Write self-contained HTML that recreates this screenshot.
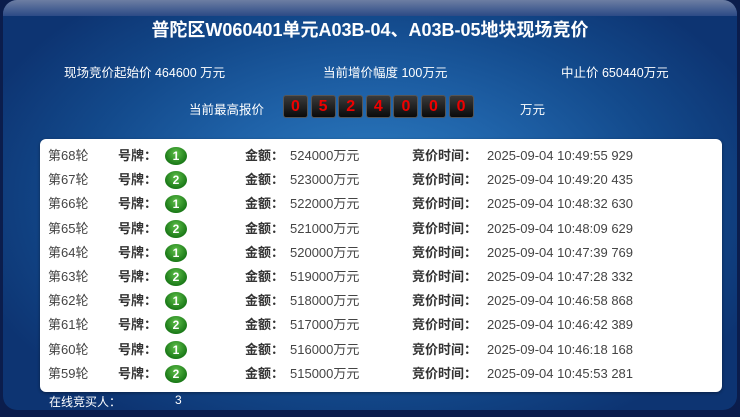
<!DOCTYPE html>
<html><head><meta charset="utf-8"><style>
*{margin:0;padding:0;box-sizing:border-box}
body{width:740px;height:417px;overflow:hidden;background:#0b1d4c;font-family:"Liberation Sans","Noto Sans CJK SC",sans-serif;position:relative}
#frame{position:absolute;left:3px;top:0;width:734px;height:410px;border-radius:14px;overflow:hidden;
background:radial-gradient(ellipse 420px 260px at 370px 200px,#2f82c6 0%,#1f62a8 40%,#134a8c 70%,#0d3472 100%)}
#top{position:absolute;left:0;top:0;width:100%;height:16px;background:linear-gradient(#6d7ea3,#2c4a86)}
.w{position:absolute;color:#fff;white-space:nowrap}
#title{top:16px;left:0;width:734px;text-align:center;font-size:18px;font-weight:bold}
.info{font-size:12.5px;top:62px}
.digits{position:absolute;left:280px;top:95px}
.d{position:absolute;top:0;width:25px;height:23px;border-radius:3px;background:linear-gradient(#3a3a3a,#0a0a0a);border:1px solid #555;color:#e00;font-weight:bold;font-size:16px;text-align:center;line-height:21px}
#panel{position:absolute;left:37px;top:139px;width:682px;height:253px;background:#fff;border-radius:6px;box-shadow:0 1px 3px rgba(0,0,0,.4)}
.row{position:absolute;left:0;height:24px;font-size:13px;color:#444;width:100%}
.row span{position:absolute;top:0;height:24px;line-height:24px;white-space:nowrap}
.row .b{font-weight:bold;color:#333}
.badge{position:absolute;top:3px;left:125px;width:22px;height:18px;border-radius:50%;background:radial-gradient(circle at 50% 35%,#5fc04a,#1b7a18 70%,#0f5a10);color:#fff;font-weight:bold;font-size:12px;text-align:center;line-height:18px}
</style></head><body>
<div id="frame">
<div id="top"></div>
<div class="w" id="title">普陀区W060401单元A03B-04、A03B-05地块现场竞价</div>
<div class="w info" style="left:61px">现场竞价起始价 464600 万元</div>
<div class="w info" style="left:320px">当前增价幅度 100万元</div>
<div class="w info" style="left:558px">中止价 650440万元</div>
<div class="w" style="left:186px;top:99px;font-size:12.5px">当前最高报价</div>
<div class="digits">
<div class="d" style="left:0">0</div><div class="d" style="left:27.6px">5</div><div class="d" style="left:55.2px">2</div><div class="d" style="left:82.8px">4</div><div class="d" style="left:110.4px">0</div><div class="d" style="left:138px">0</div><div class="d" style="left:165.6px">0</div>
</div>
<div class="w" style="left:517px;top:99px;font-size:12.5px">万元</div>
<div id="panel">
<div class="row" style="top:5px"><span style="left:8px">第68轮</span><span class="b" style="left:78px">号牌：</span><div class="badge">1</div><span class="b" style="left:205px">金额：</span><span style="left:250px">524000万元</span><span class="b" style="left:372px">竞价时间：</span><span style="left:447px">2025-09-04 10:49:55 929</span></div>
<div class="row" style="top:29.2px"><span style="left:8px">第67轮</span><span class="b" style="left:78px">号牌：</span><div class="badge">2</div><span class="b" style="left:205px">金额：</span><span style="left:250px">523000万元</span><span class="b" style="left:372px">竞价时间：</span><span style="left:447px">2025-09-04 10:49:20 435</span></div>
<div class="row" style="top:53.4px"><span style="left:8px">第66轮</span><span class="b" style="left:78px">号牌：</span><div class="badge">1</div><span class="b" style="left:205px">金额：</span><span style="left:250px">522000万元</span><span class="b" style="left:372px">竞价时间：</span><span style="left:447px">2025-09-04 10:48:32 630</span></div>
<div class="row" style="top:77.6px"><span style="left:8px">第65轮</span><span class="b" style="left:78px">号牌：</span><div class="badge">2</div><span class="b" style="left:205px">金额：</span><span style="left:250px">521000万元</span><span class="b" style="left:372px">竞价时间：</span><span style="left:447px">2025-09-04 10:48:09 629</span></div>
<div class="row" style="top:101.8px"><span style="left:8px">第64轮</span><span class="b" style="left:78px">号牌：</span><div class="badge">1</div><span class="b" style="left:205px">金额：</span><span style="left:250px">520000万元</span><span class="b" style="left:372px">竞价时间：</span><span style="left:447px">2025-09-04 10:47:39 769</span></div>
<div class="row" style="top:126px"><span style="left:8px">第63轮</span><span class="b" style="left:78px">号牌：</span><div class="badge">2</div><span class="b" style="left:205px">金额：</span><span style="left:250px">519000万元</span><span class="b" style="left:372px">竞价时间：</span><span style="left:447px">2025-09-04 10:47:28 332</span></div>
<div class="row" style="top:150.2px"><span style="left:8px">第62轮</span><span class="b" style="left:78px">号牌：</span><div class="badge">1</div><span class="b" style="left:205px">金额：</span><span style="left:250px">518000万元</span><span class="b" style="left:372px">竞价时间：</span><span style="left:447px">2025-09-04 10:46:58 868</span></div>
<div class="row" style="top:174.4px"><span style="left:8px">第61轮</span><span class="b" style="left:78px">号牌：</span><div class="badge">2</div><span class="b" style="left:205px">金额：</span><span style="left:250px">517000万元</span><span class="b" style="left:372px">竞价时间：</span><span style="left:447px">2025-09-04 10:46:42 389</span></div>
<div class="row" style="top:198.6px"><span style="left:8px">第60轮</span><span class="b" style="left:78px">号牌：</span><div class="badge">1</div><span class="b" style="left:205px">金额：</span><span style="left:250px">516000万元</span><span class="b" style="left:372px">竞价时间：</span><span style="left:447px">2025-09-04 10:46:18 168</span></div>
<div class="row" style="top:222.8px"><span style="left:8px">第59轮</span><span class="b" style="left:78px">号牌：</span><div class="badge">2</div><span class="b" style="left:205px">金额：</span><span style="left:250px">515000万元</span><span class="b" style="left:372px">竞价时间：</span><span style="left:447px">2025-09-04 10:45:53 281</span></div>
</div>
<div class="w" style="left:46px;top:393px;font-size:12px">在线竞买人：</div>
<div class="w" style="left:172px;top:393px;font-size:12px">3</div>
</div>
</body></html>
